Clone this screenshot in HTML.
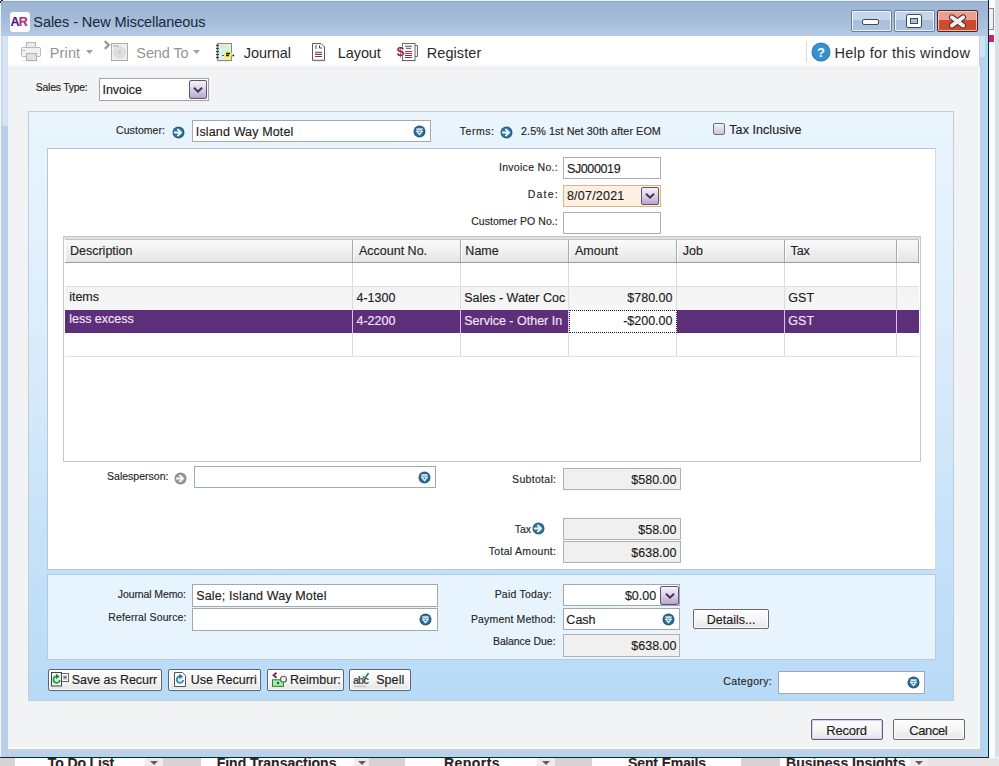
<!DOCTYPE html><html><head><meta charset="utf-8"><style>
html,body{margin:0;padding:0;}
body{width:999px;height:766px;overflow:hidden;position:relative;background:#e3e8ee;font-family:"Liberation Sans",sans-serif;}
body>div,body>svg{position:absolute;}
.t{white-space:pre;-webkit-text-stroke:0.15px currentColor;}
</style></head><body>
<div style="left:989px;top:0px;width:10px;height:766px;background:#fafbfd"></div>
<div style="left:995px;top:0px;width:4px;height:757px;background:#d8e0e8"></div>
<div style="left:989px;top:8px;width:5px;height:22px;border:1px solid #8c8c94;border-left:none;background:#eef2f4;box-sizing:border-box"></div>
<div style="left:989px;top:35px;width:5px;height:7px;background:#d0206a"></div>
<div style="left:0px;top:0px;width:989px;height:758px;background:#bacfe7"></div>
<div style="left:0px;top:0px;width:989px;height:1px;background:#e8f2f8"></div>
<div style="left:0px;top:0px;width:1px;height:758px;background:#eef4f8"></div>
<div style="left:1px;top:1px;width:987px;height:1px;background:#8fa6bb"></div>
<div style="left:1px;top:2px;width:987px;height:34px;background:linear-gradient(#9cb3d5,#a5bbd9 50%,#b3cbe6)"></div>
<div style="left:979px;top:36px;width:9px;height:721px;background:linear-gradient(90deg,#bcd0e8,#bccfec 55%,#a4ddf4 75%,#a2e0f4)"></div>
<div style="left:8px;top:749px;width:971px;height:8px;background:linear-gradient(#c8d0e4,#bfd0e8 45%,#a8daee)"></div>
<div style="left:1px;top:36px;width:7px;height:90px;background:linear-gradient(90deg,#c8d8e8,#d6e6f6 50%,#cfe0f2)"></div>
<div style="left:980px;top:36px;width:5px;height:21px;background:#d2e2f2"></div>
<div style="left:988px;top:0px;width:1px;height:758px;background:#18222e"></div>
<div style="left:0px;top:757px;width:989px;height:1px;background:#18222e"></div>
<div style="left:1px;top:0px;width:2px;height:1px;background:#2a2a2a"></div>
<div style="left:0px;top:1px;width:1px;height:2px;background:#2a2a2a"></div>
<div style="left:10px;top:12px;width:20px;height:20px;background:#fdfbff;border-radius:3px"></div>
<div class="t" style="left:10.49px;top:15.27px;font-size:12.5px;line-height:15.0px;color:#4a1c88;font-weight:bold;">A</div>
<div class="t" style="left:18.76px;top:15.27px;font-size:12.5px;line-height:15.0px;color:#b0306e;font-weight:bold;">R</div>
<div class="t" style="left:33.34px;top:13.87px;font-size:14.5px;line-height:17.4px;color:#1b2a3d;letter-spacing:-0.079px;-webkit-text-stroke:0.05px currentColor;">Sales - New Miscellaneous</div>
<div style="left:851px;top:10px;width:41px;height:22px;box-sizing:border-box;border:1px solid #6b7f96;border-radius:2px;background:linear-gradient(#c6d6ea 0,#c6d6ea 45%,#a9c1dd 46%,#a9c1dd 100%);box-shadow:inset 0 0 0 1px rgba(255,255,255,.75)"></div>
<div style="left:894px;top:10px;width:41px;height:22px;box-sizing:border-box;border:1px solid #6b7f96;border-radius:2px;background:linear-gradient(#c6d6ea 0,#c6d6ea 45%,#a9c1dd 46%,#a9c1dd 100%);box-shadow:inset 0 0 0 1px rgba(255,255,255,.75)"></div>
<div style="left:937px;top:10px;width:41px;height:22px;box-sizing:border-box;border:1px solid #4a2422;border-radius:2px;background:linear-gradient(#e9a090 0,#e9a090 45%,#d04a2c 46%,#d04a2c 100%);box-shadow:inset 0 0 0 1px rgba(255,210,200,.8)"></div>
<div style="left:862px;top:19px;width:17px;height:6px;box-sizing:border-box;background:#fff;border:1px solid #3c4c60;border-radius:2px"></div>
<div style="left:906px;top:14px;width:16px;height:14px;box-sizing:border-box;background:#fff;border:1px solid #3c4c60;border-radius:2px"></div>
<div style="left:910px;top:18px;width:8px;height:6px;box-sizing:border-box;background:#a9c1dd;border:1px solid #3c4c60"></div>
<svg style="left:948px;top:13px" width="19" height="16" viewBox="0 0 19 16"><path d="M3.8 4.2 L15.2 12.6 M15.2 4.2 L3.8 12.6" stroke="#4a2a2a" stroke-width="5.8" stroke-linecap="round"/><path d="M3.8 4.2 L15.2 12.6 M15.2 4.2 L3.8 12.6" stroke="#f2eeec" stroke-width="3.8" stroke-linecap="round"/></svg>
<div style="left:8px;top:36px;width:971px;height:31px;background:linear-gradient(#ffffff,#ffffff 88%,#f4f5f7)"></div>
<div style="left:8px;top:67px;width:971px;height:682px;background:linear-gradient(#eff0f3,#f2f3f5 4px)"></div>
<div style="left:8px;top:747px;width:971px;height:2px;background:#f9fbfd"></div>
<div style="left:978px;top:66px;width:2px;height:683px;background:#f2fbfc"></div>
<div class="t" style="left:49.81px;top:44.87px;font-size:14.5px;line-height:17.4px;color:#939393;letter-spacing:0.120px;-webkit-text-stroke:0;">Print</div>
<div class="t" style="left:136.34px;top:44.87px;font-size:14.5px;line-height:17.4px;color:#939393;letter-spacing:-0.113px;-webkit-text-stroke:0;">Send To</div>
<div class="t" style="left:243.77px;top:44.87px;font-size:14.5px;line-height:17.4px;color:#2b2b2b;letter-spacing:-0.060px;-webkit-text-stroke:0;">Journal</div>
<div class="t" style="left:337.81px;top:44.87px;font-size:14.5px;line-height:17.4px;color:#2b2b2b;letter-spacing:-0.098px;-webkit-text-stroke:0;">Layout</div>
<div class="t" style="left:426.81px;top:44.87px;font-size:14.5px;line-height:17.4px;color:#2b2b2b;letter-spacing:0.062px;-webkit-text-stroke:0;">Register</div>
<div class="t" style="left:834.41px;top:44.87px;font-size:14.5px;line-height:17.4px;color:#2b2b2b;letter-spacing:0.305px;-webkit-text-stroke:0;">Help for this window</div>
<svg style="left:86px;top:50px" width="8" height="5"><path d="M0 0 L7 0 L3.5 4z" fill="#a0a0a0"/></svg>
<svg style="left:193px;top:50px" width="8" height="5"><path d="M0 0 L7 0 L3.5 4z" fill="#a0a0a0"/></svg>
<div style="left:806px;top:41px;width:1px;height:21px;background:#d8d8d8"></div>
<svg style="left:811px;top:42px" width="20" height="20" viewBox="0 0 20 20"><circle cx="10" cy="10" r="9.5" fill="#2a7bbf"/><circle cx="10" cy="10" r="8.5" fill="#3a8fd0"/><text x="10" y="15" text-anchor="middle" font-family="Liberation Sans" font-weight="bold" font-size="13" fill="#fff">?</text></svg>
<div class="t" style="left:35.82px;top:81.16px;font-size:10.5px;line-height:12.6px;color:#262626;letter-spacing:-0.274px;">Sales Type:</div>
<div style="left:99px;top:78px;width:110px;height:23px;background:#fff;border:1px solid #a4a4a4;box-sizing:border-box"></div>
<div class="t" style="left:102.45px;top:83.07px;font-size:12.5px;line-height:15.0px;color:#1c1c1c;">Invoice</div>
<div style="left:189px;top:80px;width:18px;height:19px;box-sizing:border-box;border:1px solid #5e546e;border-radius:2px;background:linear-gradient(#f6f2fa,#d8cce6 55%,#b6a6cf)"></div>
<svg style="left:193.0px;top:86.5px" width="10" height="6" viewBox="0 0 10 6"><path d="M1 0.8 L5 4.6 L9 0.8" stroke="#3e3650" stroke-width="2" fill="none"/></svg>
<div style="left:28px;top:111px;width:926px;height:590px;box-sizing:border-box;border:1px solid #c2ccd6;background:linear-gradient(#eaf5fd,#d8ebfa 45%,#c6e2f9 70%,#bddef8 90%,#b7daf7)"></div>
<div style="left:47px;top:148px;width:889px;height:422px;background:#fff;border:1px solid #b9c6d2;border-right-color:#d0d8e0;box-sizing:border-box"></div>
<div style="left:47px;top:574px;width:889px;height:86px;background:#e8f4fd;border:1px solid #b9c9d8;box-sizing:border-box"></div>
<div class="t" style="left:116.07px;top:124.06px;font-size:10.5px;line-height:12.6px;color:#262626;letter-spacing:0.058px;">Customer:</div>
<svg style="left:171.5px;top:125.5px" width="13" height="13" viewBox="0 0 13 13"><circle cx="6.5" cy="6.5" r="6" fill="#24628a"/><circle cx="6.5" cy="6.5" r="4.8" fill="#3f86b0" opacity=".5"/><path d="M2.8 6.5 H8.2 M6 3.6 L9 6.5 L6 9.4" stroke="#eefaff" stroke-width="2" fill="none" stroke-linecap="round" stroke-linejoin="round"/></svg>
<div style="left:192px;top:120px;width:239px;height:22px;background:#fff;border:1px solid #a0a8b0;box-sizing:border-box"></div>
<div class="t" style="left:195.85px;top:125.07px;font-size:12.5px;line-height:15.0px;color:#1c1c1c;letter-spacing:0.139px;">Island Way Motel</div>
<svg style="left:412.5px;top:125.0px" width="13" height="13" viewBox="0 0 13 13"><circle cx="6.5" cy="6.5" r="6" fill="#245f82"/><circle cx="6.5" cy="6.5" r="4.6" fill="#3c80a8" opacity=".55"/><path d="M3.4 4.1 H9.6" stroke="#e6f8ff" stroke-width="1.5"/><path d="M3.7 6.1 L9.3 6.1 L6.5 9.7z" stroke="#e6f8ff" stroke-width="1.3" fill="#2a668a" stroke-linejoin="round"/></svg>
<div class="t" style="left:459.76px;top:125.06px;font-size:10.5px;line-height:12.6px;color:#262626;letter-spacing:0.539px;">Terms:</div>
<svg style="left:499.5px;top:125.5px" width="13" height="13" viewBox="0 0 13 13"><circle cx="6.5" cy="6.5" r="6" fill="#24628a"/><circle cx="6.5" cy="6.5" r="4.8" fill="#3f86b0" opacity=".5"/><path d="M2.8 6.5 H8.2 M6 3.6 L9 6.5 L6 9.4" stroke="#eefaff" stroke-width="2" fill="none" stroke-linecap="round" stroke-linejoin="round"/></svg>
<div class="t" style="left:521.06px;top:124.78px;font-size:10.8px;line-height:12.96px;color:#262626;letter-spacing:0.068px;">2.5% 1st Net 30th after EOM</div>
<div style="left:713px;top:123px;width:12px;height:12px;box-sizing:border-box;border:1px solid #6e6a7e;border-radius:2px;background:linear-gradient(#f4f0f8,#cfc4de)"></div>
<div class="t" style="left:729.32px;top:123.47px;font-size:12.5px;line-height:15.0px;color:#1c1c1c;letter-spacing:0.056px;">Tax Inclusive</div>
<div class="t" style="left:498.93px;top:161.26px;font-size:10.5px;line-height:12.6px;color:#262626;letter-spacing:0.299px;">Invoice No.:</div>
<div style="left:563px;top:157px;width:98px;height:22px;background:#fff;border:1px solid #a8aeb4;box-sizing:border-box"></div>
<div class="t" style="left:566.93px;top:162.07px;font-size:12.5px;line-height:15.0px;color:#1c1c1c;letter-spacing:-0.377px;">SJ000019</div>
<div class="t" style="left:527.84px;top:188.26px;font-size:10.5px;line-height:12.6px;color:#262626;letter-spacing:1.181px;">Date:</div>
<div style="left:563px;top:185px;width:98px;height:22px;background:#fdf0e2;border:1px solid #e0b47a;box-sizing:border-box"></div>
<div class="t" style="left:566.96px;top:189.07px;font-size:12.5px;line-height:15.0px;color:#1c1c1c;letter-spacing:0.218px;">8/07/2021</div>
<div style="left:641px;top:187px;width:18px;height:18px;box-sizing:border-box;border:1px solid #5e546e;border-radius:2px;background:linear-gradient(#f6f2fa,#d8cce6 55%,#b6a6cf)"></div>
<svg style="left:645.0px;top:193.0px" width="10" height="6" viewBox="0 0 10 6"><path d="M1 0.8 L5 4.6 L9 0.8" stroke="#3e3650" stroke-width="2" fill="none"/></svg>
<div class="t" style="left:471.17px;top:215.36px;font-size:10.5px;line-height:12.6px;color:#262626;letter-spacing:0.048px;">Customer PO No.:</div>
<div style="left:563px;top:212px;width:98px;height:22px;background:#fff;border:1px solid #a8aeb4;box-sizing:border-box"></div>
<div style="left:63px;top:236px;width:858px;height:226px;background:#fff;border:1px solid #c8c8c8;box-sizing:border-box"></div>
<div style="left:65px;top:239px;width:288px;height:24px;box-sizing:border-box;border-right:1px solid #a8a8a8;box-shadow:inset 1px 0 0 #fff;background:linear-gradient(#fbfbfb,#f0f0f0 50%,#e3e3e3)"></div>
<div style="left:353px;top:239px;width:108px;height:24px;box-sizing:border-box;border-right:1px solid #a8a8a8;box-shadow:inset 1px 0 0 #fff;background:linear-gradient(#fbfbfb,#f0f0f0 50%,#e3e3e3)"></div>
<div style="left:461px;top:239px;width:108px;height:24px;box-sizing:border-box;border-right:1px solid #a8a8a8;box-shadow:inset 1px 0 0 #fff;background:linear-gradient(#fbfbfb,#f0f0f0 50%,#e3e3e3)"></div>
<div style="left:569px;top:239px;width:108px;height:24px;box-sizing:border-box;border-right:1px solid #a8a8a8;box-shadow:inset 1px 0 0 #fff;background:linear-gradient(#fbfbfb,#f0f0f0 50%,#e3e3e3)"></div>
<div style="left:677px;top:239px;width:108px;height:24px;box-sizing:border-box;border-right:1px solid #a8a8a8;box-shadow:inset 1px 0 0 #fff;background:linear-gradient(#fbfbfb,#f0f0f0 50%,#e3e3e3)"></div>
<div style="left:785px;top:239px;width:112px;height:24px;box-sizing:border-box;border-right:1px solid #a8a8a8;box-shadow:inset 1px 0 0 #fff;background:linear-gradient(#fbfbfb,#f0f0f0 50%,#e3e3e3)"></div>
<div style="left:897px;top:239px;width:22px;height:24px;box-sizing:border-box;border-right:1px solid #a8a8a8;box-shadow:inset 1px 0 0 #fff;background:linear-gradient(#fbfbfb,#f0f0f0 50%,#e3e3e3)"></div>
<div style="left:64px;top:237px;width:856px;height:2px;background:#e0e0e0"></div>
<div style="left:65px;top:239px;width:854px;height:1px;background:#c4c4c4"></div>
<div style="left:65px;top:262px;width:854px;height:1px;background:#9c9c9c"></div>
<div class="t" style="left:69.97px;top:244.07px;font-size:12.5px;line-height:15.0px;color:#1f1f1f;">Description</div>
<div class="t" style="left:358.98px;top:244.07px;font-size:12.5px;line-height:15.0px;color:#1f1f1f;">Account No.</div>
<div class="t" style="left:465.37px;top:244.07px;font-size:12.5px;line-height:15.0px;color:#1f1f1f;">Name</div>
<div class="t" style="left:574.98px;top:244.07px;font-size:12.5px;line-height:15.0px;color:#1f1f1f;">Amount</div>
<div class="t" style="left:682.80px;top:244.07px;font-size:12.5px;line-height:15.0px;color:#1f1f1f;">Job</div>
<div class="t" style="left:790.42px;top:244.07px;font-size:12.5px;line-height:15.0px;color:#1f1f1f;">Tax</div>
<div style="left:65px;top:263px;width:854px;height:23px;background:#fff"></div>
<div style="left:65px;top:286px;width:854px;height:24px;background:linear-gradient(#f2f2f2,#f7f7f7)"></div>
<div style="left:65px;top:286px;width:854px;height:1px;background:#dedede"></div>
<div style="left:65px;top:310px;width:854px;height:23px;background:#5d2e79"></div>
<div style="left:65px;top:333px;width:854px;height:23px;background:#fff"></div>
<div style="left:65px;top:356px;width:854px;height:1px;background:#e2e2e2"></div>
<div style="left:352px;top:263px;width:1px;height:94px;background:#dcdcdc"></div>
<div style="left:352px;top:310px;width:1px;height:23px;background:#d9c2e6"></div>
<div style="left:460px;top:263px;width:1px;height:94px;background:#dcdcdc"></div>
<div style="left:460px;top:310px;width:1px;height:23px;background:#d9c2e6"></div>
<div style="left:568px;top:263px;width:1px;height:94px;background:#dcdcdc"></div>
<div style="left:568px;top:310px;width:1px;height:23px;background:#d9c2e6"></div>
<div style="left:676px;top:263px;width:1px;height:94px;background:#dcdcdc"></div>
<div style="left:676px;top:310px;width:1px;height:23px;background:#d9c2e6"></div>
<div style="left:784px;top:263px;width:1px;height:94px;background:#dcdcdc"></div>
<div style="left:784px;top:310px;width:1px;height:23px;background:#d9c2e6"></div>
<div style="left:896px;top:263px;width:1px;height:94px;background:#dcdcdc"></div>
<div style="left:896px;top:310px;width:1px;height:23px;background:#d9c2e6"></div>
<div style="left:569px;top:310px;width:108px;height:23px;background:#fff;border:1px dotted #222;box-sizing:border-box"></div>
<div class="t" style="left:69.16px;top:289.77px;font-size:12.5px;line-height:15.0px;color:#1c1c1c;">items</div>
<div class="t" style="left:356.51px;top:291.27px;font-size:12.5px;line-height:15.0px;color:#1c1c1c;">4-1300</div>
<div style="left:461px;top:286px;width:107px;height:24px;overflow:hidden"><div class="t" style="position:absolute;left:3.23px;top:5.17px;font-size:12.5px;line-height:15.0px;color:#1c1c1c;">Sales - Water Coc</div></div>
<div class="t" style="left:627.30px;top:291.27px;font-size:12.5px;line-height:15.0px;color:#1c1c1c;">$780.00</div>
<div class="t" style="left:788.37px;top:291.27px;font-size:12.5px;line-height:15.0px;color:#1c1c1c;">GST</div>
<div class="t" style="left:69.16px;top:312.47px;font-size:12.5px;line-height:15.0px;color:#f2e6f8;">less excess</div>
<div class="t" style="left:356.51px;top:314.37px;font-size:12.5px;line-height:15.0px;color:#f2e6f8;">4-2200</div>
<div style="left:461px;top:310px;width:107px;height:23px;overflow:hidden"><div class="t" style="position:absolute;left:3.23px;top:4.37px;font-size:12.5px;line-height:15.0px;color:#f2e6f8;">Service - Other In</div></div>
<div class="t" style="left:623.14px;top:314.37px;font-size:12.5px;line-height:15.0px;color:#1c1c1c;">-$200.00</div>
<div class="t" style="left:788.37px;top:314.37px;font-size:12.5px;line-height:15.0px;color:#f2e6f8;">GST</div>
<div class="t" style="left:107.12px;top:470.06px;font-size:10.5px;line-height:12.6px;color:#262626;">Salesperson:</div>
<svg style="left:173.5px;top:471.5px" width="13" height="13" viewBox="0 0 13 13"><circle cx="6.5" cy="6.5" r="6" fill="#8a8a8a"/><circle cx="6.5" cy="6.5" r="4.8" fill="#a8a8a8" opacity=".5"/><path d="M2.8 6.5 H8.2 M6 3.6 L9 6.5 L6 9.4" stroke="#eefaff" stroke-width="2" fill="none" stroke-linecap="round" stroke-linejoin="round"/></svg>
<div style="left:194px;top:466px;width:242px;height:22px;background:#fff;border:1px solid #a0a8b0;box-sizing:border-box"></div>
<svg style="left:417.5px;top:470.5px" width="13" height="13" viewBox="0 0 13 13"><circle cx="6.5" cy="6.5" r="6" fill="#245f82"/><circle cx="6.5" cy="6.5" r="4.6" fill="#3c80a8" opacity=".55"/><path d="M3.4 4.1 H9.6" stroke="#e6f8ff" stroke-width="1.5"/><path d="M3.7 6.1 L9.3 6.1 L6.5 9.7z" stroke="#e6f8ff" stroke-width="1.3" fill="#2a668a" stroke-linejoin="round"/></svg>
<div class="t" style="left:512.12px;top:473.06px;font-size:10.5px;line-height:12.6px;color:#262626;letter-spacing:0.299px;">Subtotal:</div>
<div style="left:563px;top:468px;width:118px;height:22px;background:#f0f0f0;border:1px solid #b0b0b0;box-sizing:border-box"></div>
<div class="t" style="left:631.30px;top:472.57px;font-size:12.5px;line-height:15.0px;color:#1c1c1c;">$580.00</div>
<div class="t" style="left:514.76px;top:522.56px;font-size:10.5px;line-height:12.6px;color:#262626;">Tax</div>
<svg style="left:531.5px;top:521.5px" width="13" height="13" viewBox="0 0 13 13"><circle cx="6.5" cy="6.5" r="6" fill="#24628a"/><circle cx="6.5" cy="6.5" r="4.8" fill="#3f86b0" opacity=".5"/><path d="M2.8 6.5 H8.2 M6 3.6 L9 6.5 L6 9.4" stroke="#eefaff" stroke-width="2" fill="none" stroke-linecap="round" stroke-linejoin="round"/></svg>
<div style="left:563px;top:518px;width:118px;height:22px;background:#f0f0f0;border:1px solid #b0b0b0;box-sizing:border-box"></div>
<div class="t" style="left:638.25px;top:522.57px;font-size:12.5px;line-height:15.0px;color:#1c1c1c;">$58.00</div>
<div class="t" style="left:488.76px;top:544.76px;font-size:10.5px;line-height:12.6px;color:#262626;letter-spacing:0.298px;">Total Amount:</div>
<div style="left:563px;top:541px;width:118px;height:22px;background:#f0f0f0;border:1px solid #b0b0b0;box-sizing:border-box"></div>
<div class="t" style="left:631.30px;top:545.57px;font-size:12.5px;line-height:15.0px;color:#1c1c1c;">$638.00</div>
<div class="t" style="left:117.84px;top:588.06px;font-size:10.5px;line-height:12.6px;color:#262626;letter-spacing:-0.110px;">Journal Memo:</div>
<div style="left:192px;top:584px;width:246px;height:23px;background:#fff;border:1px solid #a0a8b0;box-sizing:border-box"></div>
<div class="t" style="left:196.23px;top:588.67px;font-size:12.5px;line-height:15.0px;color:#1c1c1c;letter-spacing:0.135px;">Sale; Island Way Motel</div>
<div class="t" style="left:108.24px;top:610.86px;font-size:10.5px;line-height:12.6px;color:#262626;letter-spacing:0.118px;">Referral Source:</div>
<div style="left:192px;top:608px;width:246px;height:23px;background:#fff;border:1px solid #a0a8b0;box-sizing:border-box"></div>
<svg style="left:419.4px;top:612.7px" width="13" height="13" viewBox="0 0 13 13"><circle cx="6.5" cy="6.5" r="6" fill="#245f82"/><circle cx="6.5" cy="6.5" r="4.6" fill="#3c80a8" opacity=".55"/><path d="M3.4 4.1 H9.6" stroke="#e6f8ff" stroke-width="1.5"/><path d="M3.7 6.1 L9.3 6.1 L6.5 9.7z" stroke="#e6f8ff" stroke-width="1.3" fill="#2a668a" stroke-linejoin="round"/></svg>
<div class="t" style="left:494.64px;top:588.06px;font-size:10.5px;line-height:12.6px;color:#262626;letter-spacing:0.224px;">Paid Today:</div>
<div style="left:563px;top:584px;width:117px;height:22px;background:#fff;border:1px solid #a0a8b0;box-sizing:border-box"></div>
<div class="t" style="left:624.91px;top:589.07px;font-size:12.5px;line-height:15.0px;color:#1c1c1c;">$0.00</div>
<div style="left:660px;top:586px;width:19px;height:19px;box-sizing:border-box;border:1px solid #5e546e;border-radius:2px;background:linear-gradient(#f6f2fa,#d8cce6 55%,#b6a6cf)"></div>
<svg style="left:664.5px;top:592.5px" width="10" height="6" viewBox="0 0 10 6"><path d="M1 0.8 L5 4.6 L9 0.8" stroke="#3e3650" stroke-width="2" fill="none"/></svg>
<div class="t" style="left:470.94px;top:613.36px;font-size:10.5px;line-height:12.6px;color:#262626;letter-spacing:0.166px;">Payment Method:</div>
<div style="left:563px;top:608px;width:117px;height:22px;background:#fff;border:1px solid #a0a8b0;box-sizing:border-box"></div>
<div class="t" style="left:566.37px;top:612.57px;font-size:12.5px;line-height:15.0px;color:#1c1c1c;">Cash</div>
<svg style="left:661.5px;top:612.5px" width="13" height="13" viewBox="0 0 13 13"><circle cx="6.5" cy="6.5" r="6" fill="#245f82"/><circle cx="6.5" cy="6.5" r="4.6" fill="#3c80a8" opacity=".55"/><path d="M3.4 4.1 H9.6" stroke="#e6f8ff" stroke-width="1.5"/><path d="M3.7 6.1 L9.3 6.1 L6.5 9.7z" stroke="#e6f8ff" stroke-width="1.3" fill="#2a668a" stroke-linejoin="round"/></svg>
<div class="t" style="left:492.94px;top:635.06px;font-size:10.5px;line-height:12.6px;color:#262626;letter-spacing:-0.038px;">Balance Due:</div>
<div style="left:563px;top:634px;width:117px;height:23px;background:#f0f0f0;border:1px solid #b0b0b0;box-sizing:border-box"></div>
<div class="t" style="left:631.30px;top:639.07px;font-size:12.5px;line-height:15.0px;color:#1c1c1c;">$638.00</div>
<div style="left:693px;top:609px;width:76px;height:20px;box-sizing:border-box;border:1px solid #6a6a6a;border-radius:2px;background:linear-gradient(#fdfdfd,#f6f6f6 50%,#ececec 80%,#e4e4e4);box-shadow:inset 0 0 0 1px rgba(255,255,255,.9)"></div>
<div class="t" style="left:706.74px;top:612.57px;font-size:12.5px;line-height:15.0px;color:#1c1c1c;">Details...</div>
<div style="left:48px;top:669px;width:114px;height:22px;box-sizing:border-box;border:1px solid #5a6474;border-radius:2px;background:linear-gradient(#fdfdfd,#f6f6f6 50%,#ececec 80%,#e4e4e4);box-shadow:inset 0 0 0 1px rgba(255,255,255,.9)"></div>
<div class="t" style="left:71.83px;top:673.47px;font-size:12.5px;line-height:15.0px;color:#1c1c1c;letter-spacing:-0.059px;">Save as Recurr</div>
<div style="left:168px;top:669px;width:93px;height:22px;box-sizing:border-box;border:1px solid #5a6474;border-radius:2px;background:linear-gradient(#fdfdfd,#f6f6f6 50%,#ececec 80%,#e4e4e4);box-shadow:inset 0 0 0 1px rgba(255,255,255,.9)"></div>
<div class="t" style="left:190.84px;top:673.47px;font-size:12.5px;line-height:15.0px;color:#1c1c1c;">Use Recurri</div>
<div style="left:267px;top:669px;width:77px;height:22px;box-sizing:border-box;border:1px solid #5a6474;border-radius:2px;background:linear-gradient(#fdfdfd,#f6f6f6 50%,#ececec 80%,#e4e4e4);box-shadow:inset 0 0 0 1px rgba(255,255,255,.9)"></div>
<div class="t" style="left:289.97px;top:673.47px;font-size:12.5px;line-height:15.0px;color:#1c1c1c;letter-spacing:0.022px;">Reimbur:</div>
<div style="left:349px;top:669px;width:62px;height:22px;box-sizing:border-box;border:1px solid #5a6474;border-radius:2px;background:linear-gradient(#fdfdfd,#f6f6f6 50%,#ececec 80%,#e4e4e4);box-shadow:inset 0 0 0 1px rgba(255,255,255,.9)"></div>
<div class="t" style="left:376.13px;top:673.47px;font-size:12.5px;line-height:15.0px;color:#1c1c1c;letter-spacing:0.102px;">Spell</div>
<div class="t" style="left:723.27px;top:675.36px;font-size:10.5px;line-height:12.6px;color:#262626;letter-spacing:0.371px;">Category:</div>
<div style="left:778px;top:671px;width:147px;height:23px;background:#fff;border:1px solid #a0a8b0;box-sizing:border-box"></div>
<svg style="left:906.5px;top:676.0px" width="13" height="13" viewBox="0 0 13 13"><circle cx="6.5" cy="6.5" r="6" fill="#245f82"/><circle cx="6.5" cy="6.5" r="4.6" fill="#3c80a8" opacity=".55"/><path d="M3.4 4.1 H9.6" stroke="#e6f8ff" stroke-width="1.5"/><path d="M3.7 6.1 L9.3 6.1 L6.5 9.7z" stroke="#e6f8ff" stroke-width="1.3" fill="#2a668a" stroke-linejoin="round"/></svg>
<div style="left:811px;top:719px;width:72px;height:21px;box-sizing:border-box;border:1px solid #6a5a82;border-radius:2px;background:linear-gradient(#fdfdfd,#f6f6f6 50%,#ececec 80%,#e4e4e4);box-shadow:inset 0 0 0 1px #dccdf2"></div>
<div class="t" style="left:826.28px;top:723.29px;font-size:13px;line-height:15.6px;color:#1c1c1c;letter-spacing:-0.221px;">Record</div>
<div style="left:893px;top:719px;width:72px;height:21px;box-sizing:border-box;border:1px solid #6a6a6a;border-radius:2px;background:linear-gradient(#fdfdfd,#f6f6f6 50%,#ececec 80%,#e4e4e4);box-shadow:inset 0 0 0 1px rgba(255,255,255,.9)"></div>
<div class="t" style="left:909.34px;top:723.29px;font-size:13px;line-height:15.6px;color:#1c1c1c;letter-spacing:-0.428px;">Cancel</div>
<div style="left:0px;top:758px;width:989px;height:8px;background:#d4d4d4"></div>
<div style="left:928px;top:758px;width:71px;height:8px;background:#e6e6e6"></div>
<div style="left:15px;top:758px;width:130px;height:8px;background:#fff"></div>
<div style="left:201px;top:758px;width:153px;height:8px;background:#fff"></div>
<div style="left:405px;top:758px;width:132px;height:8px;background:#fff"></div>
<div style="left:592px;top:758px;width:149px;height:8px;background:#fff"></div>
<div style="left:780px;top:758px;width:130px;height:8px;background:#fff"></div>
<div style="left:145px;top:758px;width:18px;height:8px;background:#ececec"></div>
<svg style="left:150.0px;top:761px" width="8" height="5"><path d="M0 0 L8 0 L4 4z" fill="#606060"/></svg>
<div style="left:354px;top:758px;width:15px;height:8px;background:#ececec"></div>
<svg style="left:357.5px;top:761px" width="8" height="5"><path d="M0 0 L8 0 L4 4z" fill="#606060"/></svg>
<div style="left:537px;top:758px;width:18px;height:8px;background:#ececec"></div>
<svg style="left:542.0px;top:761px" width="8" height="5"><path d="M0 0 L8 0 L4 4z" fill="#606060"/></svg>
<div style="left:910px;top:758px;width:18px;height:8px;background:#ececec"></div>
<svg style="left:915.0px;top:761px" width="8" height="5"><path d="M0 0 L8 0 L4 4z" fill="#606060"/></svg>
<div class="t" style="left:47.84px;top:754.75px;font-size:14px;line-height:16.8px;color:#262626;font-weight:bold;letter-spacing:-0.119px;">To Do List</div>
<div class="t" style="left:216.66px;top:754.75px;font-size:14px;line-height:16.8px;color:#262626;font-weight:bold;">Find Transactions</div>
<div class="t" style="left:444.06px;top:754.75px;font-size:14px;line-height:16.8px;color:#262626;font-weight:bold;letter-spacing:0.435px;">Reports</div>
<div class="t" style="left:628.10px;top:754.75px;font-size:14px;line-height:16.8px;color:#262626;font-weight:bold;letter-spacing:-0.139px;">Sent Emails</div>
<div class="t" style="left:786.06px;top:754.75px;font-size:14px;line-height:16.8px;color:#262626;font-weight:bold;letter-spacing:-0.019px;">Business Insights</div>
<svg style="left:18px;top:40px" width="26" height="23" viewBox="18 40 26 23"><ellipse cx="31" cy="60.5" rx="11" ry="1.5" fill="#000" opacity=".05"/><rect x="26.5" y="42.5" width="9" height="7" fill="#ececec" stroke="#b4b4b4"/><rect x="21.5" y="47.5" width="19" height="9" rx="1" fill="#f0f0f0" stroke="#b8b8b8"/><rect x="23" y="50" width="2" height="1" fill="#b0b0b0"/><rect x="26.5" y="53.5" width="10" height="7" fill="#e0e0e0" stroke="#b0b0b0"/></svg>
<svg style="left:102px;top:40px" width="30" height="23" viewBox="102 40 30 23"><path d="M105.5 41.8 L108.8 45 L105.5 48.2" stroke="#9a9a9a" stroke-width="2.4" fill="none" stroke-linecap="round"/><rect x="111.5" y="43.5" width="16" height="17" fill="#efefef" stroke="#acacac"/><rect x="113" y="45" width="6" height="2" fill="#c8c8c8"/><circle cx="119.5" cy="52.5" r="5.5" fill="#e2e2e2" stroke="#cfcfcf"/><circle cx="119.5" cy="52.5" r="2.2" fill="#d0d0d0"/></svg>
<svg style="left:212px;top:40px" width="26" height="23" viewBox="212 40 26 23"><defs><linearGradient id="jg" x1="0" y1="0" x2="1" y2="1" gradientUnits="objectBoundingBox"><stop offset="0" stop-color="#d6f0f6"/><stop offset=".55" stop-color="#d8f2ee"/><stop offset="1" stop-color="#f6f27a"/></linearGradient></defs><ellipse cx="225" cy="60.8" rx="9" ry="1.3" fill="#000" opacity=".08"/><rect x="217.5" y="43.5" width="14" height="17" fill="url(#jg)" stroke="#8a8a8a"/><path d="M216 45.5h3M216 48.5h3M216 51.5h3M216 54.5h3M216 57.5h3" stroke="#444" stroke-width="1.3"/><ellipse cx="227.8" cy="54.5" rx="4" ry="3.6" fill="#f4f060"/><ellipse cx="224" cy="46" rx="3" ry="2.2" fill="#e0f0a0" opacity=".7"/><path d="M222 55.5h2" stroke="#555" stroke-width="1"/><path d="M226 53.5h4M226 55.5h3" stroke="#1a1a1a" stroke-width="1.3"/><circle cx="233.3" cy="55.5" r="0.9" fill="#111"/></svg>
<svg style="left:308px;top:40px" width="22" height="23" viewBox="308 40 22 23"><ellipse cx="319" cy="60.8" rx="8" ry="1.3" fill="#000" opacity=".08"/><path d="M312.5 43.5 H321 L324.5 47 V60.3 H312.5 Z" fill="#fff" stroke="#5a5a5a"/><path d="M315 46h2M315 48h2M319.5 45.5v2.5h2.5" stroke="#444" stroke-width="1" fill="none"/><path d="M315 52.3h7M315 54.4h7M315 56.5h7" stroke="#7a3a48" stroke-width="1.1"/></svg>
<svg style="left:395px;top:40px" width="26" height="23" viewBox="395 40 26 23"><ellipse cx="408" cy="60.8" rx="9" ry="1.3" fill="#000" opacity=".08"/><path d="M414.5 45.5 H417.5 V56.5 H414.5" fill="#f2f2f2" stroke="#6a6a6a"/><rect x="402.5" y="43.5" width="12.5" height="17" fill="#fff" stroke="#6a6a6a"/><path d="M405 46.2h7M406 48.3h5" stroke="#505050" stroke-width="1"/><path d="M405 51.4h7M405 53.4h7M405 55.5h7M405 57.5h7" stroke="#8a3040" stroke-width="1"/><text x="400.4" y="56.3" text-anchor="middle" font-family="Liberation Sans" font-weight="bold" font-size="13.5" fill="#8a2a3c" stroke="#fff" stroke-width="1.2" paint-order="stroke">$</text></svg>
<svg style="left:50px;top:671px" width="20" height="17" viewBox="50 671 20 17"><rect x="61.5" y="673.5" width="7" height="8" fill="#fff" stroke="#666"/><path d="M64 675.5v4M66 675.5v4M64 677.3h2" stroke="#555" stroke-width="1"/><rect x="51.5" y="672.5" width="10" height="13.5" fill="#e4f8ea" stroke="#444"/><circle cx="56.6" cy="679.6" r="3.2" fill="#c8f4d4"/><path d="M59.8 680 A3.2 3.2 0 1 1 56.6 676.4" stroke="#2a9a52" stroke-width="1.7" fill="none"/><path d="M56 673.8 L59.6 676.4 L56 679 Z" fill="#1f7a3f"/></svg>
<svg style="left:173px;top:671px" width="15" height="17" viewBox="173 671 15 17"><path d="M174.5 672.5 H182.5 L185.5 675.5 V686.5 H174.5 Z" fill="#fff" stroke="#555"/><circle cx="180" cy="679.6" r="3.2" fill="#d8f0fa"/><path d="M183.2 680 A3.2 3.2 0 1 1 180 676.4" stroke="#3a86b2" stroke-width="1.7" fill="none"/><path d="M179.4 673.8 L183 676.4 L179.4 679 Z" fill="#2a6a90"/></svg>
<svg style="left:270px;top:671px" width="20" height="17" viewBox="270 671 20 17"><path d="M276.5 672.8 L273.5 675.3 L276.5 677.8" stroke="#8a2444" stroke-width="1.8" fill="none"/><rect x="272.5" y="679.8" width="11" height="6.5" fill="#a6f0a8" stroke="#2e7a3c"/><circle cx="278" cy="683" r="1.3" fill="#1a6a2a"/><circle cx="283.5" cy="679.3" r="3" fill="#f0f0f0" stroke="#5a5a5a" stroke-width="1.1"/></svg>
<svg style="left:352px;top:671px" width="18" height="17" viewBox="352 671 18 17"><text x="353" y="684" font-family="Liberation Sans" font-weight="bold" font-size="10.5" fill="#505050" letter-spacing="-1">abc</text><path d="M362.8 676.6 L365 678.2 L368.6 673" stroke="#2a7a50" stroke-width="1.5" fill="none"/><path d="M354 686.3h12" stroke="#b8b8b8" stroke-width="1"/></svg>
</body></html>
